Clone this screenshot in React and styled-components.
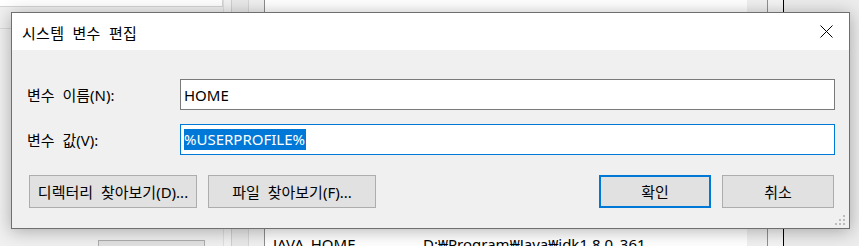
import React from "react";
import styled, { createGlobalStyle } from "styled-components";

const GlobalStyle = createGlobalStyle`
  html, body { margin: 0; padding: 0; }
  body {
    width: 859px;
    height: 246px;
    overflow: hidden;
    background: #f0f0f0;
    font-family: "Noto Sans", "Noto Sans CJK KR", sans-serif;
  }
`;

const Screen = styled.div`
  position: relative;
  width: 859px;
  height: 246px;
  overflow: hidden;
  display: flex;
  background: #f0f0f0;
`;

const LeftPane = styled.div`
  width: 223px;
  flex: none;
  display: flex;
  flex-direction: column;
  background: #f0f0f0;
`;

const TopBox = styled.div`
  height: 6px;
  background: #ffffff;
  border-bottom: 1px solid #d4d4d4;
  border-right: 1px solid #d4d4d4;
`;

const HLine = styled.div`
  margin-top: 21px;
  height: 1px;
  background: #d9d9d9;
`;

const GhostButton = styled.div`
  margin-top: auto;
  margin-left: 98px;
  width: 105px;
  height: 5px;
  background: #e1e1e1;
  border: 1px solid #adadad;
  border-bottom: none;
`;

const Strip = styled.div`
  flex: none;
  width: ${(p) => p.$w}px;
  background: ${(p) => p.$bg};
  border-left: 1px solid ${(p) => p.$line};
  box-sizing: border-box;
`;

const List = styled.div`
  flex: none;
  width: 503px;
  box-sizing: border-box;
  border-left: 1px solid #8c8c8c;
  display: flex;
  background: #f0f0f0;
`;

const ListBody = styled.div`
  flex: 1;
  background: #ffffff;
  display: flex;
  flex-direction: column;
  justify-content: flex-end;
`;

const ListScroll = styled.div`
  width: 20px;
  background: #f0f0f0;
`;

const ListRow = styled.div`
  display: flex;
  height: 12px;
  overflow: hidden;
  align-items: flex-start;
  padding-left: 8px;
  font-size: 15px;
  line-height: 20px;
  color: #000;
  white-space: nowrap;
`;

const Cell = styled.div`
  width: ${(p) => p.$w}px;
  flex: none;
`;

const RightPane = styled.div`
  flex: 1;
  background: #ececec;
`;

const Dialog = styled.div`
  position: absolute;
  left: 11px;
  top: 12px;
  width: 839px;
  height: 217px;
  box-sizing: border-box;
  border: 1px solid #6f6f6f;
  background: #f0f0f0;
  box-shadow: 0 2px 16px rgba(0, 0, 0, 0.3);
  display: flex;
  flex-direction: column;
`;

const TitleBar = styled.div`
  height: 37px;
  flex: none;
  background: #ffffff;
  display: flex;
  align-items: center;
  justify-content: space-between;
  padding: 0 13px 0 10px;
`;

const Title = styled.div`
  font-size: 15px;
  color: #000;
  word-spacing: 4px;
  letter-spacing: 0.3px;
  margin-top: 1px;
`;

const CloseBtn = styled.div`
  width: 20px;
  height: 20px;
  display: flex;
  align-items: center;
  justify-content: center;
`;

const Body = styled.div`
  flex: 1;
  display: flex;
  flex-direction: column;
  padding: 29px 14px 0 15px;
`;

const FieldRow = styled.div`
  display: flex;
  align-items: center;
  margin-bottom: ${(p) => p.$mb}px;
`;

const Label = styled.div`
  width: 153px;
  flex: none;
  font-size: 15px;
  color: #000;
  word-spacing: 4px;
`;

const Input = styled.div`
  flex: 1;
  height: 31px;
  box-sizing: border-box;
  border: 1px solid ${(p) => (p.$focused ? "#0078d7" : "#7a7a7a")};
  background: #fff;
  display: flex;
  align-items: center;
  padding-left: 3px;
  font-size: 15px;
  color: #000;
`;

const Selection = styled.span`
  background: #0078d7;
  color: #fff;
  line-height: 21px;
  padding: 0 1px 0 0;
`;

const ButtonRow = styled.div`
  display: flex;
  gap: 11px;
  margin-top: 20px;
  padding-left: 2px;
  padding-right: 1px;
`;

const Button = styled.div`
  width: ${(p) => p.$w}px;
  height: 33px;
  box-sizing: border-box;
  background: #e1e1e1;
  border: ${(p) => (p.$primary ? "2px solid #0078d7" : "1px solid #adadad")};
  display: flex;
  align-items: center;
  justify-content: center;
  font-size: 15px;
  color: #000;
  word-spacing: 4px;
  margin-left: ${(p) => (p.$push ? "auto" : "0")};
`;

const Grip = styled.svg`
  position: absolute;
  right: 3px;
  bottom: 2px;
`;

export default function App() {
  return (
    <>
      <GlobalStyle />
      <Screen>
        <LeftPane>
          <TopBox />
          <HLine />
          <GhostButton />
        </LeftPane>
        <Strip $w={8} $bg="#f2f2f2" $line="#dedede" />
        <Strip $w={17} $bg="#e9e9e9" $line="#cfcfcf" />
        <Strip $w={16} $bg="#f0f0f0" $line="#d6d6d6" />
        <List>
          <ListBody>
            <ListRow>
              <Cell $w={150}>JAVA_HOME</Cell>
              <Cell $w={320}>D:₩Program₩Java₩jdk1.8.0_361</Cell>
            </ListRow>
          </ListBody>
          <ListScroll />
        </List>
        <Strip $w={16} $bg="#f4f4f4" $line="#8f8f8f" />
        <RightPane as={Strip} $w={76} $bg="#ececec" $line="#cfcfcf" />

        <Dialog>
          <TitleBar>
            <Title>시스템 변수 편집</Title>
            <CloseBtn>
              <svg width="13" height="13" viewBox="0 0 13 13">
                <path d="M0.5 0.5 L12.5 12.5 M12.5 0.5 L0.5 12.5" stroke="#000" strokeWidth="1" fill="none" />
              </svg>
            </CloseBtn>
          </TitleBar>
          <Body>
            <FieldRow $mb={14}>
              <Label>변수 이름(N):</Label>
              <Input>HOME</Input>
            </FieldRow>
            <FieldRow $mb={0}>
              <Label>변수 값(V):</Label>
              <Input $focused>
                <Selection>%USERPROFILE%</Selection>
              </Input>
            </FieldRow>
            <ButtonRow>
              <Button $w={168}>디렉터리 찾아보기(D)...</Button>
              <Button $w={168}>파일 찾아보기(F)...</Button>
              <Button $w={112} $primary $push>확인</Button>
              <Button $w={112}>취소</Button>
            </ButtonRow>
          </Body>
          <Grip width="11" height="11" viewBox="0 0 11 11">
            <g fill="#bdbdbd">
              <rect x="8" y="0" width="2" height="2" />
              <rect x="4" y="4" width="2" height="2" />
              <rect x="8" y="4" width="2" height="2" />
              <rect x="0" y="8" width="2" height="2" />
              <rect x="4" y="8" width="2" height="2" />
              <rect x="8" y="8" width="2" height="2" />
            </g>
          </Grip>
        </Dialog>
      </Screen>
    </>
  );
}
